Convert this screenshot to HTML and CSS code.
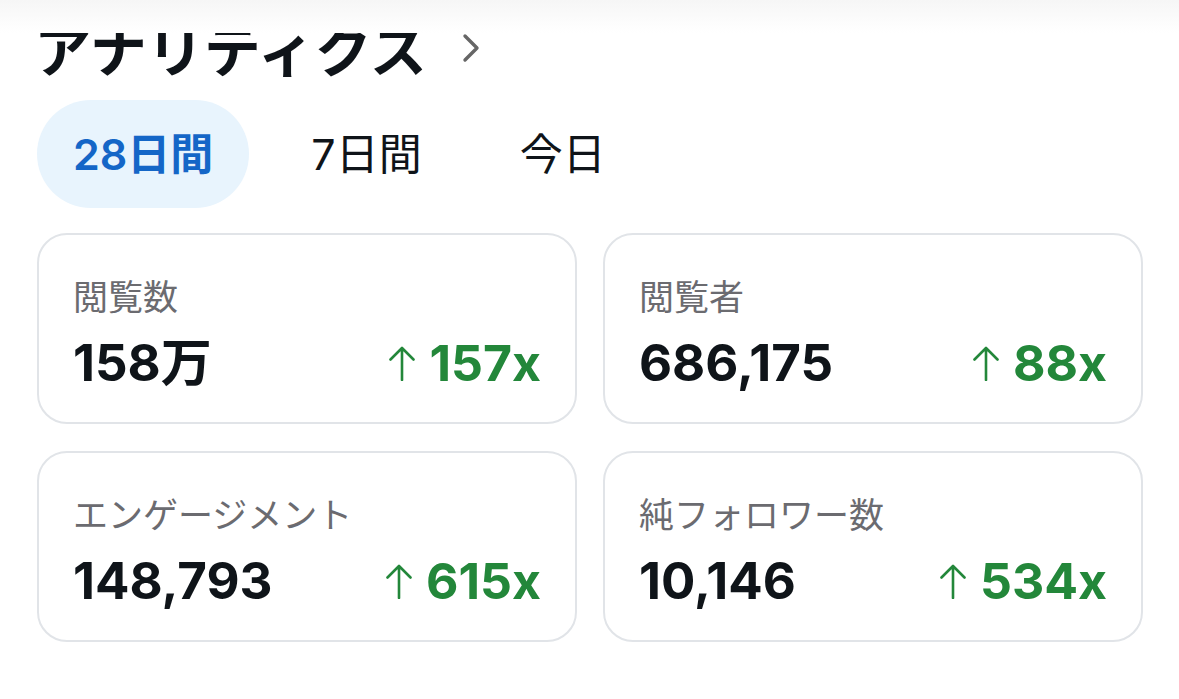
FILE: index.html
```html
<!DOCTYPE html>
<html lang="ja">
<head>
<meta charset="utf-8">
<link rel="stylesheet" href="styles.css">
</head>
<body>
<div class="topfade"></div>
<main class="page">
  <div class="title-row">
    <h1 class="title">アナリティクス</h1>
    <svg class="chev" width="22" height="30" viewBox="0 0 22 30"><path d="M5 3 L17 15 L5 27" fill="none" stroke="#666" stroke-width="3.4" stroke-linecap="round" stroke-linejoin="round"/></svg>
  </div>
  <div class="tabs">
    <div class="tab active">28日間</div>
    <div class="tab">7日間</div>
    <div class="tab">今日</div>
  </div>
  <div class="cards">
    <div class="card">
      <div class="label">閲覧数</div>
      <div class="row"><span class="value">158万</span><span class="delta"><svg class="arrow" width="28" height="36" viewBox="0 0 28 36"><path d="M14 3 V35 M2.5 14.5 L14 3 L25.5 14.5" fill="none" stroke="#23873a" stroke-width="2.6" stroke-linecap="round" stroke-linejoin="round"/></svg>157x</span></div>
    </div>
    <div class="card">
      <div class="label">閲覧者</div>
      <div class="row"><span class="value">686,175</span><span class="delta"><svg class="arrow" width="28" height="36" viewBox="0 0 28 36"><path d="M14 3 V35 M2.5 14.5 L14 3 L25.5 14.5" fill="none" stroke="#23873a" stroke-width="2.6" stroke-linecap="round" stroke-linejoin="round"/></svg>88x</span></div>
    </div>
    <div class="card">
      <div class="label">エンゲージメント</div>
      <div class="row"><span class="value">148,793</span><span class="delta"><svg class="arrow" width="28" height="36" viewBox="0 0 28 36"><path d="M14 3 V35 M2.5 14.5 L14 3 L25.5 14.5" fill="none" stroke="#23873a" stroke-width="2.6" stroke-linecap="round" stroke-linejoin="round"/></svg>615x</span></div>
    </div>
    <div class="card">
      <div class="label">純フォロワー数</div>
      <div class="row"><span class="value">10,146</span><span class="delta"><svg class="arrow" width="28" height="36" viewBox="0 0 28 36"><path d="M14 3 V35 M2.5 14.5 L14 3 L25.5 14.5" fill="none" stroke="#23873a" stroke-width="2.6" stroke-linecap="round" stroke-linejoin="round"/></svg>534x</span></div>
    </div>
  </div>
</main>
</body>
</html>
```

FILE: styles.css
```css
html, body {
  margin: 0;
  padding: 0;
  background: #ffffff;
}
body {
  font-family: Inter, "Noto Sans CJK JP", sans-serif;
  color: #0f1419;
  width: 1179px;
  height: 699px;
  overflow: hidden;
  position: relative;
}
.topfade {
  position: absolute;
  left: 0;
  top: 0;
  width: 100%;
  height: 33px;
  background: linear-gradient(#f6f6f6 0, #fbfbfb 18px, #ffffff 33px);
  z-index: 2;
}
.page {
  padding: 20px 36px 0 37px;
}
.title-row {
  display: flex;
  align-items: center;
  gap: 33px;
  height: 54px;
}
.title {
  margin: 0 0 0 -3px;
  font-family: "Noto Sans CJK JP", sans-serif;
  font-weight: 700;
  font-size: 57px;
  line-height: 54px;
  color: #0f1419;
  letter-spacing: 0;
}
.chev {
  margin-top: 2px;
}
.tabs {
  display: flex;
  gap: 26px;
  margin-top: 26px;
}
.tab {
  height: 108px;
  line-height: 108px;
  padding: 0 36px;
  border-radius: 54px;
  font-family: Inter, "Noto Sans CJK JP", sans-serif;
  font-size: 43px;
  color: #0f1419;
}
.tab.active {
  background: #e8f4fd;
  color: #1466c7;
  font-weight: 600;
}
.cards {
  display: grid;
  grid-template-columns: 1fr 1fr;
  column-gap: 26px;
  row-gap: 27px;
  margin-top: 25px;
}
.card {
  height: 191px;
  box-sizing: border-box;
  border: 2px solid #e1e4e8;
  border-radius: 30px;
  padding: 36px 34px 0 34px;
}
.label {
  font-family: "Noto Sans CJK JP", sans-serif;
  font-size: 35px;
  line-height: 48px;
  color: #6b6b70;
}
.row {
  display: flex;
  justify-content: space-between;
  align-items: baseline;
  margin-top: 14px;
  line-height: 60px;
}
.value {
  font-family: Inter, "Noto Sans CJK JP", sans-serif;
  font-weight: 700;
  font-size: 51px;
  color: #0f1419;
}
.delta {
  display: flex;
  align-items: flex-end;
  font-family: Inter, sans-serif;
  font-weight: 700;
  font-size: 50px;
  color: #23873a;
}
.arrow {
  margin: 0 13px 12px 0;
}
```
